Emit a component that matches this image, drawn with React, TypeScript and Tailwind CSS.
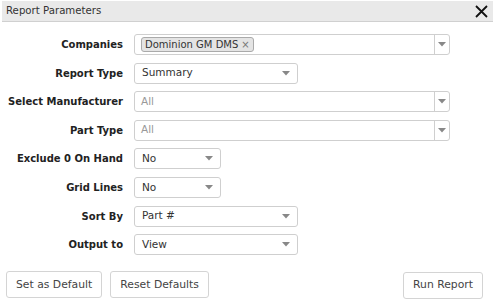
const font = { fontFamily: '"DejaVu Sans", Verdana, sans-serif' };

function Arrow() {
  return (
    <svg width="8" height="5" viewBox="0 0 8 5" className="shrink-0">
      <path d="M0 0 L8 0 L4 4.5 Z" fill="#888" />
    </svg>
  );
}

function Select({ value, width }: { value: string; width: string }) {
  return (
    <div
      className={`flex h-[21px] ${width} items-center justify-between rounded-[3px] border border-[#cfcfcf] bg-white pl-[7px] pr-[7px] text-[10.5px] text-[#333]`}
    >
      <span>{value}</span>
      <Arrow />
    </div>
  );
}

function MultiSelect({ children }: { children: React.ReactNode }) {
  return (
    <div className="flex h-[21px] w-[316px] items-stretch rounded-[3px] border border-[#cfcfcf] bg-white text-[10.5px]">
      <div className="flex flex-1 items-center pl-[6px]">{children}</div>
      <div className="flex w-[15px] items-center justify-center border-l border-[#cfcfcf]">
        <Arrow />
      </div>
    </div>
  );
}

const rows: { label: string; control: React.ReactNode }[] = [
  {
    label: "Companies",
    control: (
      <MultiSelect>
        <span className="flex h-[15px] items-center rounded-[3px] border border-[#aaa] bg-[#e4e4e4] pl-[3px] pr-[3px] text-[10px] text-[#333]">
          Dominion GM DMS <span className="ml-[3px] text-[10px] text-[#777]">×</span>
        </span>
      </MultiSelect>
    ),
  },
  { label: "Report Type", control: <Select value="Summary" width="w-[164px]" /> },
  {
    label: "Select Manufacturer",
    control: (
      <MultiSelect>
        <span className="text-[#999]">All</span>
      </MultiSelect>
    ),
  },
  {
    label: "Part Type",
    control: (
      <MultiSelect>
        <span className="text-[#999]">All</span>
      </MultiSelect>
    ),
  },
  { label: "Exclude 0 On Hand", control: <Select value="No" width="w-[87px]" /> },
  { label: "Grid Lines", control: <Select value="No" width="w-[87px]" /> },
  { label: "Sort By", control: <Select value="Part #" width="w-[164px]" /> },
  { label: "Output to", control: <Select value="View" width="w-[164px]" /> },
];

function Button({ children }: { children: React.ReactNode }) {
  return (
    <button className="h-[27px] rounded-[3px] border border-[#d4d4d4] bg-white px-[9px] text-[10.8px] text-[#444]">
      {children}
    </button>
  );
}

export default function App() {
  return (
    <div className="h-[305px] w-[495px] overflow-hidden bg-white" style={font}>
      <div className="mx-[2px] mt-[1px] flex h-[21px] items-center justify-between border-b border-[#d0d0d0] bg-[#e9e9e9] pl-[4px] pr-[5px]">
        <span className="text-[10.2px] text-[#333]">Report Parameters</span>
        <svg width="13" height="13" viewBox="0 0 13 13">
          <path d="M1 1 L12 12 M12 1 L1 12" stroke="#111" strokeWidth="1.8" />
        </svg>
      </div>
      <div className="mt-[12px] grid grid-cols-[123px_auto] gap-x-[11px] gap-y-[7.6px]">
        {rows.map((r) => (
          <div key={r.label} className="contents">
            <div className="flex h-[21px] items-center justify-end text-[10px] font-bold text-[#222]">
              {r.label}
            </div>
            <div>{r.control}</div>
          </div>
        ))}
      </div>
      <div className="mt-[16px] flex items-center pl-[6px] pr-[12px]">
        <div className="flex gap-[8px]">
          <Button>Set as Default</Button>
          <Button>Reset Defaults</Button>
        </div>
        <div className="ml-auto">
          <Button>Run Report</Button>
        </div>
      </div>
    </div>
  );
}
